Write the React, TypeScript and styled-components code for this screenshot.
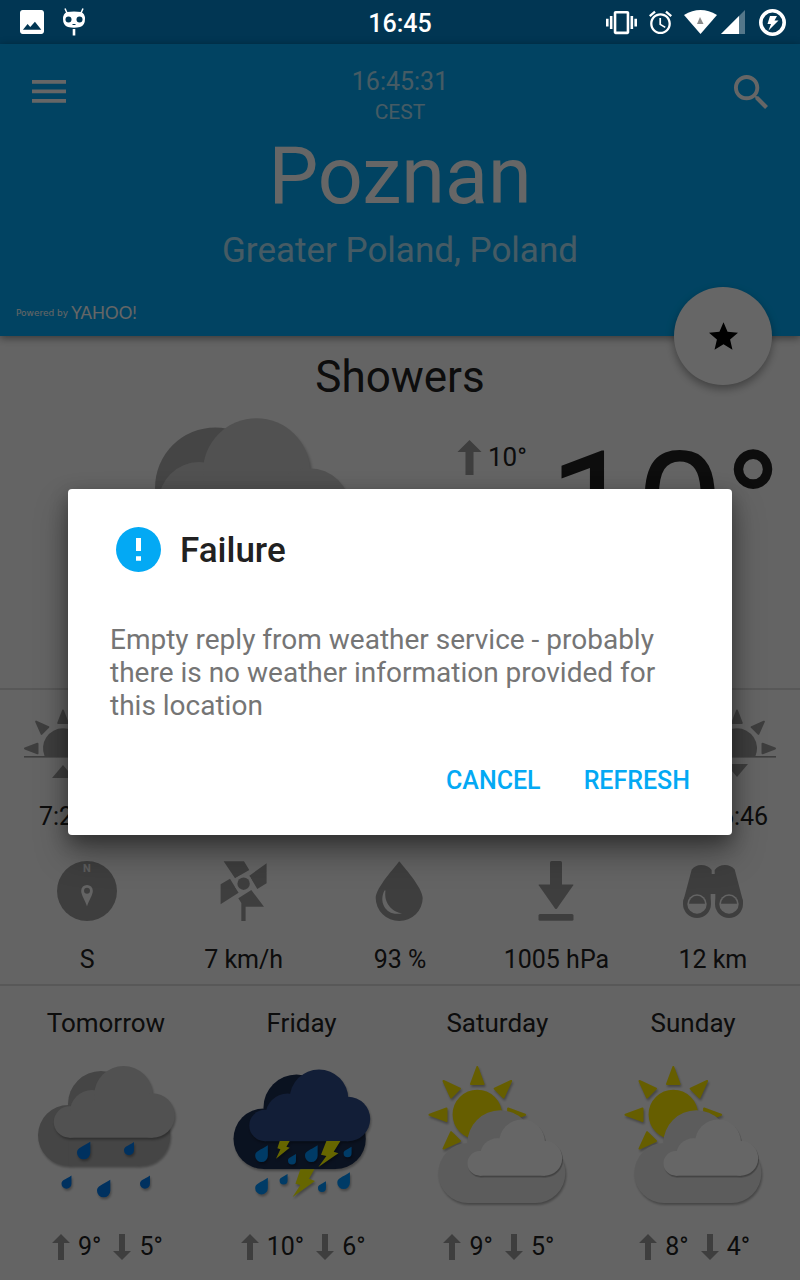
import React from "react";
import styled, { createGlobalStyle } from "styled-components";

const GlobalStyle = createGlobalStyle`
  * { box-sizing: border-box; }
  body { margin: 0; background: #fafafa; font-family: Roboto, sans-serif; color: #212121; }
  h1, h2, h3, p { margin: 0; padding: 0; font-size: inherit; font-weight: 400; }
  button { border: 0; padding: 0; background: none; font: inherit; color: inherit; cursor: pointer; }
  svg { display: block; flex: none; }
`;

const Page = styled.div`
  min-height: 100vh;
  display: flex;
  flex-direction: column;
`;

const StatusBar = styled.div`
  display: grid;
  grid-template-columns: 1fr auto 1fr;
  align-items: center;
  height: 44px;
  padding: 0 14px 0 20px;
  background: #013653;
  color: #fff;
`;

const StatusTime = styled.time`
  font-size: 25px;
  font-weight: 500;
  line-height: 32px;
  padding: 3px 6px 0 0;
`;

const StatusIcons = styled.div<{ $end?: boolean }>`
  display: flex;
  align-items: center;
  gap: ${(p) => (p.$end ? 12 : 19)}px;
  justify-content: ${(p) => (p.$end ? "flex-end" : "flex-start")};
`;

const Network = styled.div`
  display: flex;
  align-items: center;
  gap: 4px;
  margin-right: 2px;
`;

const Screen = styled.div`
  position: relative;
  flex: 1;
`;

const Header = styled.header`
  position: relative;
  padding: 23px 32px 11px;
  background: #03a9f4;
  color: #fff;
  box-shadow: 0 2px 8px rgba(0, 0, 0, 0.45);
`;

const HeaderTop = styled.div`
  display: grid;
  grid-template-columns: 34px 1fr 34px;
  align-items: start;
  text-align: center;
`;

const IconButton = styled.button`
  display: flex;
  align-items: center;
  height: 34px;
  margin-top: 8px;
`;

const Clock = styled.p`
  font-size: 25px;
  line-height: 30px;
  color: rgba(255, 255, 255, 0.7);
`;

const Zone = styled.p`
  font-size: 21px;
  line-height: 30px;
  color: rgba(255, 255, 255, 0.7);
`;

const City = styled.h1`
  font-size: 79px;
  line-height: 98px;
`;

const Region = styled.p`
  font-size: 35px;
  line-height: 52px;
  color: rgba(255, 255, 255, 0.7);
`;

const Powered = styled.a`
  display: inline-flex;
  align-items: center;
  gap: 3px;
  height: 24px;
  margin: 24px 0 0 -16px;
  font: 9px "DejaVu Sans", sans-serif;
  color: #fff;
  text-decoration: none;
  vertical-align: top;
`;

const Yahoo = styled.span`
  font: 17px/24px Lato, sans-serif;
`;

const Favourite = styled.button`
  position: absolute;
  right: 28px;
  bottom: -49px;
  width: 98px;
  height: 98px;
  border-radius: 50%;
  display: grid;
  place-items: center;
  background: #fff;
  color: #000;
  box-shadow: 0 4px 8px rgba(0, 0, 0, 0.35);
`;

const Section = styled.section`
  border-bottom: 2px solid #dcdcdc;
`;

const Current = styled(Section)`
  padding: 18px 18px 3px 24px;
`;

const Condition = styled.h2`
  padding-right: 6px;
  font-size: 44px;
  line-height: 46px;
  text-align: center;
`;

const CurrentRow = styled.div`
  display: flex;
  align-items: flex-start;
  padding-left: 58px;
`;

const High = styled.div`
  display: flex;
  align-items: center;
  gap: 6px;
  margin: 40px 0 0 90px;
  font-size: 26px;
  line-height: 35px;
`;

const Temperature = styled.div`
  margin: 49px 0 0 auto;
  font-size: 156px;
  font-weight: 400;
  line-height: 120px;
`;

const Details = styled(Section)`
  padding: 16px 0 8px;
`;

const SunTimes = styled.div`
  display: flex;
  justify-content: space-between;
  padding: 0 24px;
`;

const Measures = styled.div`
  display: flex;
  padding: 0 9px;
  margin-top: 28px;
`;

const Measure = styled.div<{ $gap: number; $grow?: boolean }>`
  display: flex;
  flex-direction: column;
  align-items: center;
  flex: ${(p) => (p.$grow ? "1 1 0" : "none")};
  gap: ${(p) => p.$gap}px;
  font-size: 25px;
  line-height: 32px;
`;

const Forecast = styled.section`
  display: flex;
  padding: 21px 9px 17px 8px;
`;

const Day = styled.article`
  flex: 1 1 0;
  display: flex;
  flex-direction: column;
  align-items: center;
  line-height: 32px;
`;

const DayName = styled.h3`
  font-size: 26px;
`;

const DayIcon = styled.div`
  margin: 17px 0 19px;
`;

const Range = styled.div`
  display: flex;
  gap: 12px;
  padding-left: 3px;
  font-size: 25px;
`;

const Reading = styled.span`
  display: flex;
  align-items: center;
  gap: 8px;
`;

const Shaded = styled.g`
  filter: drop-shadow(1px 2px 1px rgba(0, 0, 0, 0.3));
`;

const Scrim = styled.div`
  position: absolute;
  inset: 0;
  display: flex;
  align-items: center;
  padding: 0 68px;
  background: rgba(0, 0, 0, 0.6);
`;

const Dialog = styled.div`
  flex: 1;
  padding: 38px 42px;
  border-radius: 4px;
  background: #fff;
  box-shadow: 0 18px 32px rgba(0, 0, 0, 0.35), 0 6px 18px rgba(0, 0, 0, 0.3);
`;

const DialogHead = styled.div`
  display: flex;
  align-items: center;
  gap: 19px;
  padding-left: 6px;
`;

const DialogTitle = styled.h2`
  padding-top: 2px;
  font-size: 35px;
  font-weight: 500;
  line-height: 43px;
`;

const Message = styled.p`
  margin: 51px 0 43px;
  font-size: 28px;
  line-height: 33px;
  color: #757575;
`;

const Actions = styled.div`
  display: flex;
  justify-content: flex-end;
  gap: 43px;
`;

const ActionButton = styled.button`
  font-size: 25px;
  font-weight: 500;
  line-height: 32px;
  color: #03a9f4;
`;

const GREY = "#9c9c9c";
const PAPER = "#fafafa";

const DROP = "M13.3 0V11A6.6 6.6 0 0 1 0 11C0 6 5 5.5 13.3 0Z";

type DropSpot = [x: number, y: number, scale: number];

const Drops = ({ spots, color }: { spots: DropSpot[]; color: string }) => (
  <Shaded fill={color}>
    {spots.map(([x, y, s]) => (
      <path key={`${x}-${y}`} d={DROP} transform={`translate(${x} ${y}) scale(${s})`} />
    ))}
  </Shaded>
);

const CloudBack = ({ fill }: { fill: string }) => (
  <Shaded fill={fill}>
    <circle cx="40.3" cy="79.3" r="30.3" />
    <circle cx="73" cy="48" r="33" />
    <circle cx="112" cy="79.3" r="30.3" />
    <rect x="40.3" y="50" width="71.7" height="59.6" />
  </Shaded>
);

const CloudFront = ({ fill }: { fill: string }) => (
  <Shaded fill={fill}>
    <circle cx="41.5" cy="66" r="15.7" />
    <circle cx="64" cy="56" r="22" />
    <circle cx="95.5" cy="39.3" r="29.3" />
    <circle cx="124.5" cy="59.5" r="22.2" />
    <rect x="41.5" y="56" width="83" height="25.7" />
  </Shaded>
);

const ShowersIcon = ({ size = 156 }: { size?: number }) => (
  <svg width={size} height={size} viewBox="0 0 156 156" aria-hidden>
    <CloudBack fill="#acacac" />
    <CloudFront fill="#cacaca" />
    <Drops
      color="#007aee"
      spots={[[49, 85.7, 1], [96, 86, 0.75], [33.5, 119.5, 0.75], [69, 123.7, 1], [112, 119.5, 0.75]]}
    />
  </svg>
);

const StormIcon = () => (
  <svg width="156" height="156" viewBox="0 0 156 156" aria-hidden>
    <g transform="translate(-0.5 3.5)">
      <CloudBack fill="#1b2d50" />
      <CloudFront fill="#2e4c8a" />
    </g>
    <Shaded fill="#ffff00">
      <path d="M55.7 85H65.7L62.4 90.7 65.7 91.7 52 102.7 56.4 93.3 53.4 92.3Z" />
      <path d="M102.4 85H116.4L109.7 95.7 114.4 97.3 94.4 111 102.4 100 97 98.7Z" />
      <path d="M76.4 113.3H90.4L85 122.7 91 125 68.4 141.3 76.4 129 71.4 127.7Z" />
    </Shaded>
    <Drops
      color="#0094ff"
      spots={[
        [31.2, 89.3, 0.95], [64, 98, 0.6], [81, 89.3, 0.95], [119.6, 90.7, 0.6],
        [31.2, 121.7, 0.95], [55.6, 118, 0.6], [94, 125.3, 0.6], [113.3, 116.3, 0.95],
      ]}
    />
  </svg>
);

const SunCloudIcon = () => (
  <svg width="156" height="156" viewBox="0 0 156 156" aria-hidden>
    <Shaded fill="#ffeb00" stroke="#ffeb00" strokeWidth="2" strokeLinejoin="round">
      <circle cx="58.3" cy="58.5" r="23.7" />
      {[-135, -90, -45, 0, 45, 90].map((a) => (
        <path key={a} d="M58.3 11L52 28H64.6Z" transform={`rotate(${a} 58.3 58.8)`} />
      ))}
    </Shaded>
    <Shaded fill="#e7e7e7">
      <circle cx="49.3" cy="117" r="30" />
      <circle cx="81.3" cy="87.3" r="33" />
      <circle cx="116.3" cy="117" r="30" />
      <rect x="49.3" y="88" width="67" height="59" />
    </Shaded>
    <g transform="translate(28.3 55.7) scale(.783)">
      <CloudFront fill="#fff" />
    </g>
  </svg>
);

const Arrow = ({ down, width = 18, height = 26 }: { down?: boolean; width?: number; height?: number }) => (
  <svg width={width} height={height} viewBox="0 0 18 26" aria-hidden>
    <path fill={GREY} d={down ? "M6 0H12V17H18L9 26 0 17H6Z" : "M6 26H12V9H18L9 0 0 9H6Z"} />
  </svg>
);

const HorizonIcon = ({ set }: { set?: boolean }) => (
  <svg width="78" height="74" viewBox="0 0 78 74" fill={GREY} aria-hidden>
    <path d="M20.6 50.2A20 20 0 1 1 57.4 50.2Z" />
    <rect y="50" width="78" height="1.6" />
    {[-90, -45, 0, 45, 90].map((a) => (
      <path
        key={a}
        d="M39 4.5L34.2 17H43.8Z"
        stroke={GREY}
        strokeWidth="2"
        strokeLinejoin="round"
        transform={`rotate(${a} 39 42.5)`}
      />
    ))}
    <path d={set ? "M28 58H50L39 71Z" : "M28 72H50L39 59Z"} />
  </svg>
);

const CompassIcon = () => (
  <svg width="60" height="60" viewBox="0 0 60 60" aria-hidden>
    <circle cx="30" cy="30" r="30" fill={GREY} />
    <text x="30" y="11" fontSize="11" fontWeight="700" textAnchor="middle" fill="#e8e8e8">N</text>
    <path fill={PAPER} d="M30 45.3C28 39 24.2 34 24.2 29.7A5.8 5.8 0 0 1 35.8 29.7C35.8 34 32 39 30 45.3Z" />
    <circle cx="30" cy="29.7" r="3" fill={GREY} />
  </svg>
);

const WindIcon = () => (
  <svg width="60" height="60" viewBox="0 0 60 60" fill={GREY} aria-hidden>
    <path d="M9.6 .3H30L35.3 9 21 17.3ZM52.6 2.3V22.3L43.3 28 35.3 14.7ZM6.6 23.3L16 17.7 24.6 31.7 6.6 43.3ZM24.3 37.3L37.3 29 50 45.7H31.6V60H27.3V42Z" />
    <circle cx="29.6" cy="22.7" r="9" fill={PAPER} />
    <circle cx="29.6" cy="22.7" r="6.2" />
  </svg>
);

const HumidityIcon = () => (
  <svg width="60" height="60" viewBox="0 0 60 60" aria-hidden>
    <path fill={GREY} d="M29.5 .6C33 5 52.7 27 52.7 37A23.5 23 0 0 1 5.7 37C5.7 27 26 5 29 .6Z" />
    <path fill={PAPER} d="M14.5 29.5C8 42 17 56 32 52.2C22 51 13.5 42 15.5 29.5Z" />
  </svg>
);

const PressureIcon = () => (
  <svg width="60" height="60" viewBox="0 0 60 60" fill={GREY} aria-hidden>
    <rect x="24" width="12" height="26" rx="1.5" />
    <path d="M13 23.5H47Q47.8 23.5 47.3 24.3L31 47.5Q30 48.5 29 47.5L12.7 24.3Q12.2 23.5 13 23.5Z" />
    <rect x="12.5" y="53" width="35" height="6.7" rx="1.5" />
  </svg>
);

const VisibilityIcon = () => (
  <svg width="60" height="60" viewBox="0 0 60 60" fill={GREY} aria-hidden>
    <path d="M.3 40L8.7 8.5Q12.5 4 18 4Q25 4 28.7 9V13H31.7V9Q35.5 4 42 4Q48 4 51.7 8.5L60 40V43H32.3V33H27.7V43H0Z" />
    {[14, 46].map((x) => (
      <g key={x}>
        <circle cx={x} cy="43" r="14" />
        <circle cx={x} cy="43" r="9.7" fill={PAPER} />
        <path d={`M${x - 8} 42.8A8 8 0 0 1 ${x + 8} 42.8Z`} />
      </g>
    ))}
  </svg>
);

const days = [
  { name: "Tomorrow", icon: <ShowersIcon />, high: 9, low: 5 },
  { name: "Friday", icon: <StormIcon />, high: 10, low: 6 },
  { name: "Saturday", icon: <SunCloudIcon />, high: 9, low: 5 },
  { name: "Sunday", icon: <SunCloudIcon />, high: 8, low: 4 },
];

const measures = [
  { value: "S", icon: <CompassIcon /> },
  { value: "7 km/h", icon: <WindIcon /> },
  { value: "93 %", icon: <HumidityIcon /> },
  { value: "1005 hPa", icon: <PressureIcon /> },
  { value: "12 km", icon: <VisibilityIcon /> },
];

export default function App() {
  return (
    <Page>
      <GlobalStyle />
      <StatusBar>
        <StatusIcons>
          <svg width="24" height="24" viewBox="3 3 18 18" fill="#fff" aria-hidden>
            <path
              fillRule="evenodd"
              d="M21 19V5c0-1.1-.9-2-2-2H5c-1.1 0-2 .9-2 2v14c0 1.1.9 2 2 2h14c1.1 0 2-.9 2-2zM5.2 17.8L8.7 13.5L10.7 15.7L14.2 11.8L19 17.8Z"
            />
          </svg>
          <svg width="22" height="28" viewBox="0 0 22 28" aria-hidden>
            <path d="M2 .5L4 5M20 .5L18 5" stroke="#fff" strokeWidth="1.5" fill="none" />
            <path fill="#fff" d="M4 4Q11 3 18 4Q22 5.5 22 11Q22 17.5 17 19Q11 20.5 5 19Q0 17.5 0 11Q0 5.5 4 4Z" />
            <circle cx="5.5" cy="11.5" r="3" fill="#013653" />
            <circle cx="16.5" cy="11.5" r="3" fill="#013653" />
            <path d="M9.5 16.5H12.5" stroke="#013653" strokeWidth="1" />
            <path d="M11 21V27.5" stroke="#fff" strokeWidth="2.6" />
          </svg>
        </StatusIcons>
        <StatusTime>16:45</StatusTime>
        <StatusIcons $end>
          <svg width="31" height="31" viewBox="0 0 24 24" fill="#fff" aria-hidden>
            <path d="M0 15h2V9H0v6zm3 2h2V7H3v10zm19-8v6h2V9h-2zm-3 8h2V7h-2v10zM16.5 3h-9C6.67 3 6 3.67 6 4.5v15c0 .83.67 1.5 1.5 1.5h9c.83 0 1.5-.67 1.5-1.5v-15c0-.83-.67-1.5-1.5-1.5zM16 19H8V5h8v14z" />
          </svg>
          <svg width="23" height="25" viewBox="2 1.5 20 21" fill="#fff" aria-hidden>
            <path d="M22 5.72l-4.6-3.86-1.29 1.53 4.6 3.86L22 5.72zM7.88 3.39L6.6 1.86 2 5.71l1.29 1.53 4.59-3.85zM12.5 8H11v6l4.75 2.85.75-1.23-4-2.37V8zM12 4c-4.97 0-9 4.03-9 9s4.02 9 9 9c4.97 0 9-4.03 9-9s-4.03-9-9-9zm0 16c-3.87 0-7-3.13-7-7s3.13-7 7-7 7 3.13 7 7-3.13 7-7 7z" />
          </svg>
          <Network>
            <svg width="33" height="24" viewBox="0 0 33 24" aria-hidden>
              <path fill="#fff" d="M0 5Q16.5-5 33 5L16.5 24Z" />
              <path fill="#8a8a8a" d="M16 7L19.5 14H13Z" />
            </svg>
            <svg width="24" height="24" viewBox="0 0 24 24" aria-hidden>
              <path fill="#54778a" d="M24 0V24H0Z" />
              <path fill="#fff" d="M18 6V24H0Z" />
            </svg>
          </Network>
          <svg width="27" height="27" viewBox="0 0 27 27" aria-hidden>
            <circle cx="13.5" cy="13.5" r="11.7" fill="none" stroke="#fff" strokeWidth="3.6" />
            <path fill="#fff" d="M11 7H18L15.5 11.5H19.5L9.5 21.5L12 15H8.5Z" />
          </svg>
        </StatusIcons>
      </StatusBar>

      <Screen>
        <Header>
          <HeaderTop>
            <IconButton aria-label="Menu">
              <svg width="34" height="25" viewBox="0 0 34 25" aria-hidden>
                <path fill="#fff" d="M0 0H34V3.7H0ZM0 9.5H34V13.2H0ZM0 19H34V22.7H0Z" />
              </svg>
            </IconButton>
            <div>
              <Clock>16:45:31</Clock>
              <Zone>CEST</Zone>
              <City>Poznan</City>
              <Region>Greater Poland, Poland</Region>
            </div>
            <IconButton aria-label="Search">
              <svg width="34" height="34" viewBox="3 3 17.5 17.5" fill="#fff" aria-hidden>
                <path d="M15.5 14h-.79l-.28-.27C15.41 12.59 16 11.11 16 9.5 16 5.91 13.09 3 9.5 3S3 5.91 3 9.5 5.91 16 9.5 16c1.61 0 3.09-.59 4.23-1.57l.27.28v.79l5 4.99L20.49 19l-4.99-5zm-6 0C7.01 14 5 11.99 5 9.5S7.01 5 9.5 5 14 7.01 14 9.5 11.99 14 9.5 14z" />
              </svg>
            </IconButton>
          </HeaderTop>
          <Powered href="#">
            Powered by <Yahoo>YAHOO!</Yahoo>
          </Powered>
          <Favourite aria-label="Favourite">
            <svg width="29" height="28" viewBox="2 2 20 19" aria-hidden>
              <path d="M12 17.27L18.18 21l-1.64-7.03L22 9.24l-7.19-.61L12 2 9.19 8.63 2 9.24l5.46 4.73L5.82 21z" />
            </svg>
          </Favourite>
        </Header>

        <Current>
          <Condition>Showers</Condition>
          <CurrentRow>
            <ShowersIcon size={285} />
            <High>
              <Arrow width={25} height={35} />
              10°
            </High>
            <Temperature>10°</Temperature>
          </CurrentRow>
        </Current>

        <Details>
          <SunTimes>
            <Measure $gap={21}>
              <HorizonIcon />
              <span>7:25</span>
            </Measure>
            <Measure $gap={21}>
              <HorizonIcon set />
              <span>16:46</span>
            </Measure>
          </SunTimes>
          <Measures>
            {measures.map((m) => (
              <Measure key={m.value} $gap={23} $grow>
                {m.icon}
                <span>{m.value}</span>
              </Measure>
            ))}
          </Measures>
        </Details>

        <Forecast>
          {days.map((d) => (
            <Day key={d.name}>
              <DayName>{d.name}</DayName>
              <DayIcon>{d.icon}</DayIcon>
              <Range>
                <Reading><Arrow />{d.high}°</Reading>
                <Reading><Arrow down />{d.low}°</Reading>
              </Range>
            </Day>
          ))}
        </Forecast>

        <Scrim>
          <Dialog role="alertdialog" aria-labelledby="dialog-title" aria-describedby="dialog-message">
            <DialogHead>
              <svg width="45" height="45" viewBox="0 0 45 45" aria-hidden>
                <circle cx="22.5" cy="22.5" r="22.5" fill="#03a9f4" />
                <path fill="#fff" d="M20 11H25V24H20ZM20 29.3H25V33.7H20Z" />
              </svg>
              <DialogTitle id="dialog-title">Failure</DialogTitle>
            </DialogHead>
            <Message id="dialog-message">
              Empty reply from weather service - probably there is no weather information provided for this location
            </Message>
            <Actions>
              <ActionButton>CANCEL</ActionButton>
              <ActionButton>REFRESH</ActionButton>
            </Actions>
          </Dialog>
        </Scrim>
      </Screen>
    </Page>
  );
}
